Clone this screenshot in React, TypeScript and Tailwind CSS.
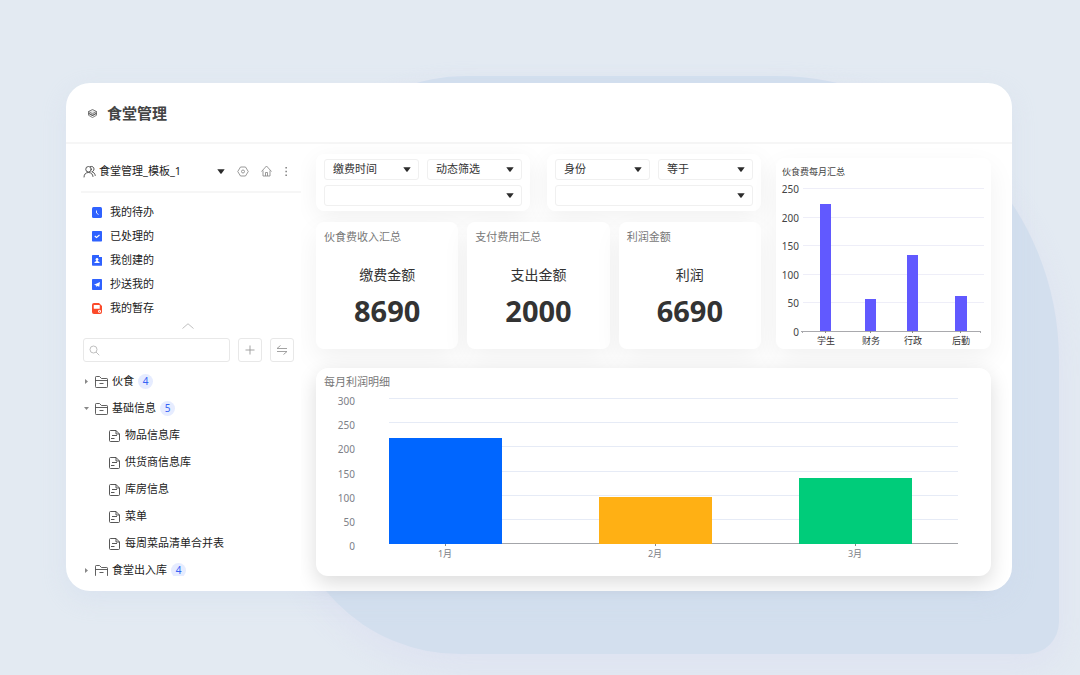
import type { ReactNode } from "react";

type BarDatum = { label: string; x: number; width: number; top: number; fill: string };
type Tick = { label: string; y: number };

const menuItems = [
  { label: "我的待办", icon: <TodoIcon /> },
  { label: "已处理的", icon: <DoneIcon /> },
  { label: "我创建的", icon: <CreatedIcon /> },
  { label: "抄送我的", icon: <SentIcon /> },
  { label: "我的暂存", icon: <DraftIcon /> },
];

const tree = [
  { label: "伙食", count: 4, open: false, children: [] },
  {
    label: "基础信息",
    count: 5,
    open: true,
    children: ["物品信息库", "供货商信息库", "库房信息", "菜单", "每周菜品清单合并表"],
  },
  { label: "食堂出入库", count: 4, open: false, children: [] },
];

const stats = [
  { title: "伙食费收入汇总", label: "缴费金额", value: "8690" },
  { title: "支付费用汇总", label: "支出金额", value: "2000" },
  { title: "利润金额", label: "利润", value: "6690" },
];

const feeTicks: Tick[] = [
  { label: "250", y: 8 },
  { label: "200", y: 37 },
  { label: "150", y: 65 },
  { label: "100", y: 94 },
  { label: "50", y: 122 },
  { label: "0", y: 151 },
];

const feeBars: BarDatum[] = [
  { label: "学生", x: 44, width: 11, top: 24, fill: "#6159ff" },
  { label: "财务", x: 89, width: 11, top: 119, fill: "#6159ff" },
  { label: "行政", x: 131, width: 11, top: 75, fill: "#6159ff" },
  { label: "后勤", x: 179, width: 12, top: 116, fill: "#6159ff" },
];

const profitTicks: Tick[] = [
  { label: "300", y: 8 },
  { label: "250", y: 32 },
  { label: "200", y: 56 },
  { label: "150", y: 81 },
  { label: "100", y: 105 },
  { label: "50", y: 129 },
  { label: "0", y: 153 },
];

const profitBars: BarDatum[] = [
  { label: "1月", x: 73, width: 113, top: 48, fill: "#0066ff" },
  { label: "2月", x: 283, width: 113, top: 107, fill: "#ffb014" },
  { label: "3月", x: 483, width: 113, top: 88, fill: "#00cc7a" },
];

function LogoIcon() {
  return (
    <svg className="h-[11px] w-[11px]" viewBox="0 0 22 22" fill="none" stroke="#555" strokeWidth="1.500" strokeLinejoin="round">
      <path d="M11 3l8 4-8 4.500L3 7z" fill="#e4e4e4" />
      <path d="M3 7v7.500L11 19l8-4.500V7" />
      <path d="M3 10.500l8 4.500 8-4.500" strokeWidth="2.200" />
    </svg>
  );
}

function UsersIcon() {
  return (
    <svg className="h-[13px] w-[13px]" viewBox="0 0 26 26" fill="none" stroke="#444" strokeWidth="1.800" strokeLinecap="round">
      <circle cx="11" cy="8.500" r="5.500" />
      <path d="M2 24c0-5.500 3.500-9 9-9s8.500 3.500 9 8" />
      <path d="M15 3c4-1 7 1.500 7 5 0 3-2 5-4.500 5.500C21.500 14.500 24 17 24.500 21" />
    </svg>
  );
}

function SettingsIcon() {
  return (
    <svg className="h-[11px] w-3" viewBox="0 0 24 22" fill="none" stroke="#888" strokeWidth="1.700">
      <path d="M7 2h10l5.500 9L17 20H7l-5.500-9z" strokeLinejoin="round" />
      <circle cx="12" cy="11" r="3" />
    </svg>
  );
}

function HomeIcon() {
  return (
    <svg className="h-3 w-[11px]" viewBox="0 0 22 24" fill="none" stroke="#888" strokeWidth="1.700" strokeLinejoin="round">
      <path d="M1 13L11 2l10 11M4 11v11h14V11" />
      <path d="M9 22v-7h4v7" />
    </svg>
  );
}

function MoreIcon() {
  return (
    <svg className="h-[11px] w-1" viewBox="0 0 8 22" fill="#666">
      <rect x="3" y="2" width="2.500" height="3" />
      <rect x="3" y="9.500" width="2.500" height="3" />
      <rect x="3" y="17" width="2.500" height="3" />
    </svg>
  );
}

function Caret() {
  return (
    <svg className="h-[5px] w-2" viewBox="0 0 8 5" fill="#2b2b2b">
      <path d="M.3.300h7.400L4.600 4.400q-.6.600-1.200 0z" />
    </svg>
  );
}

function TodoIcon() {
  return (
    <svg className="h-[11px] w-[10px]" viewBox="0 0 20 22">
      <path d="M3 0h14a3 3 0 0 1 3 3v16a3 3 0 0 1-3 3H3a3 3 0 0 1-3-3V3a3 3 0 0 1 3-3z" fill="#2f62ff" />
      <path d="M9 7v5l4 3" stroke="#fff" strokeWidth="1.700" fill="none" />
    </svg>
  );
}

function DoneIcon() {
  return (
    <svg className="h-[11px] w-[10px]" viewBox="0 0 20 22">
      <rect width="20" height="21" rx="1.500" fill="#2f62ff" />
      <path d="M5.500 10l3.500 3 6-5" stroke="#fff" strokeWidth="2.200" fill="none" />
    </svg>
  );
}

function CreatedIcon() {
  return (
    <svg className="h-[11px] w-[10px]" viewBox="0 0 20 22">
      <path d="M1.500 0H14v4h6v16.500a1 1 0 0 1-1 1H1.500A1.500 1.500 0 0 1 0 20V1.500A1.500 1.500 0 0 1 1.500 0z" fill="#2f62ff" />
      <circle cx="10" cy="8.500" r="2.700" fill="#fff" />
      <path d="M8.800 10h2.400l.6 2.500L15 14v2H5v-2l3.200-1.500z" fill="#fff" />
    </svg>
  );
}

function SentIcon() {
  return (
    <svg className="h-[11px] w-[10px]" viewBox="0 0 20 22">
      <rect width="20" height="22" rx="1.500" fill="#2f62ff" />
      <path d="M4 11.500L16 6l-1.500 9.500-4-1.500L8.500 16v-3z" fill="#fff" />
    </svg>
  );
}

function DraftIcon() {
  return (
    <svg className="h-[11px] w-[10px]" viewBox="0 0 20 22">
      <path d="M4 0h10l6 6v12a4 4 0 0 1-4 4H4a4 4 0 0 1-4-4V4a4 4 0 0 1 4-4z" fill="#fb4a2a" />
      <rect x="3.500" y="4" width="12" height="7.500" rx="1" fill="#fff" />
      <circle cx="15" cy="16.500" r="3" fill="#fff" />
      <circle cx="15" cy="16.500" r="1.200" fill="#fb4a2a" />
    </svg>
  );
}

function SearchIcon() {
  return (
    <svg className="h-[11px] w-[11px] shrink-0" viewBox="0 0 22 22" fill="none" stroke="#b5b5b5" strokeWidth="1.700">
      <circle cx="9" cy="9" r="7" />
      <path d="M14 14l6.500 6.500" />
    </svg>
  );
}

function FolderIcon() {
  return (
    <svg className="h-3 w-[13px] shrink-0" viewBox="0 0 26 24" fill="none" stroke="#444" strokeWidth="1.700" strokeLinejoin="round">
      <path d="M1 21V2.500A1.500 1.500 0 0 1 2.500 1H9l4 4h10.500A1.500 1.500 0 0 1 25 6.500V21.500a1.500 1.500 0 0 1-1.500 1.500h-21A1.500 1.500 0 0 1 1 21.500z" />
      <path d="M1 9h24M9 15h8" />
    </svg>
  );
}

function FileIcon() {
  return (
    <svg className="h-3 w-[11px] shrink-0" viewBox="0 0 22 24" fill="none" stroke="#444" strokeWidth="1.800" strokeLinejoin="round">
      <path d="M3 1h11l7 7v13a2 2 0 0 1-2 2H3a2 2 0 0 1-2-2V3a2 2 0 0 1 2-2z" />
      <path d="M14 1v7h7M6 11h10M4 17h7" />
    </svg>
  );
}

function Card({ className = "", children }: { className?: string; children: ReactNode }) {
  return <section className={`bg-white ${className}`}>{children}</section>;
}

function FilterSelect({ label, value }: { label: string; value: string }) {
  return (
    <div className="relative min-w-0 flex-1">
      <select
        aria-label={label}
        defaultValue={value}
        className="block h-[21px] w-full appearance-none rounded-[3px] border border-[#f0f0f0] bg-white pr-5 pl-2 text-[11px] text-[#333]"
      >
        <option value={value}>{value}</option>
      </select>
      <span className="pointer-events-none absolute inset-y-0 right-2 flex items-center">
        <Caret />
      </span>
    </div>
  );
}

function FilterCard({ field, operator }: { field: string; operator: string }) {
  return (
    <Card className="flex flex-1 flex-col gap-[5px] rounded-[8px] px-2 py-[5px] shadow-[0_6px_24px_rgba(0,0,0,0.06)]">
      <div className="flex gap-2">
        <FilterSelect label="字段" value={field} />
        <FilterSelect label="条件" value={operator} />
      </div>
      <div className="flex">
        <FilterSelect label="值" value="" />
      </div>
    </Card>
  );
}

function FeeChart() {
  return (
    <svg className="block w-full" viewBox="0 0 215 169" role="img" aria-label="伙食费每月汇总">
      {feeTicks.slice(0, -1).map((t) => (
        <rect key={t.label} x="27" y={t.y} width="181" height="1" fill="#eeeef8" />
      ))}
      {feeTicks.map((t) => (
        <text key={t.label} x="23" y={t.y + 5} textAnchor="end" fontSize="10" fill="#444">
          {t.label}
        </text>
      ))}
      <rect x="25" y="151" width="180" height="1" fill="#a9a9ad" />
      <rect x="26" y="151" width="1" height="2" fill="#a9a9ad" />
      <rect x="204" y="151" width="1" height="2" fill="#a9a9ad" />
      {feeBars.map((b) => (
        <g key={b.label}>
          <rect x={b.x} y={b.top} width={b.width} height={151 - b.top} fill={b.fill} />
          <rect x={b.x + 5} y="151" width="1" height="2" fill="#888" />
          <text x={b.x + 6} y="164" textAnchor="middle" fontSize="9" fill="#333">
            {b.label}
          </text>
        </g>
      ))}
    </svg>
  );
}

function ProfitChart() {
  return (
    <svg className="block w-full" viewBox="0 0 675 186" role="img" aria-label="每月利润明细">
      {profitTicks.slice(0, -1).map((t) => (
        <rect key={t.label} x="73" y={t.y} width="569" height="1" fill="#e6ebf6" />
      ))}
      {profitTicks.map((t) => (
        <text key={t.label} x="39" y={t.y + 7} textAnchor="end" fontSize="10" fill="#7d8087">
          {t.label}
        </text>
      ))}
      <rect x="73" y="153" width="569" height="1" fill="#a3a5a9" />
      {profitBars.map((b) => (
        <g key={b.label}>
          <rect x={b.x} y={b.top} width={b.width} height={154 - b.top} fill={b.fill} />
          <rect x={b.x + 56} y="154" width="1" height="2" fill="#888" />
          <text x={b.x + 56} y="167" textAnchor="middle" fontSize="9" fill="#7d8087">
            {b.label}
          </text>
        </g>
      ))}
    </svg>
  );
}

function CountBadge({ count }: { count: number }) {
  return (
    <span className="flex h-[15px] w-[15px] items-center justify-center rounded-full bg-[#e6ecff] text-[10px] text-[#3563f5]">
      {count}
    </span>
  );
}

function TreeNav() {
  return (
    <ul className="mt-[6px] h-[208px] overflow-hidden pl-[3px] text-[11px] text-[#222]">
      {tree.map((node) => (
        <li key={node.label}>
          <button type="button" aria-expanded={node.open} className="flex h-[27px] items-center gap-1">
            <svg className="mr-[2px] h-[5px] w-[5px]" viewBox="0 0 10 10" fill="#888">
              {node.open ? <path d="M0 2h10L5 8z" /> : <path d="M2 0v10l6-5z" />}
            </svg>
            <FolderIcon />
            <span>{node.label}</span>
            <CountBadge count={node.count} />
          </button>
          {node.open && (
            <ul>
              {node.children.map((child) => (
                <li key={child}>
                  <a href="#" className="flex h-[27px] items-center gap-[5px] pl-[25px]">
                    <FileIcon />
                    {child}
                  </a>
                </li>
              ))}
            </ul>
          )}
        </li>
      ))}
    </ul>
  );
}

function SideBar() {
  return (
    <aside className="relative z-10 ml-[15px] w-[220px] shrink-0 self-start bg-white">
      <div className="flex h-[49px] items-center border-b-2 border-[#f6f6f6] pt-[7px] pl-[2px]">
        <button type="button" className="flex w-[142px] items-center gap-[3px] text-[11px] text-[#222]">
          <UsersIcon />
          <span>食堂管理_模板_1</span>
          <span className="ml-auto">
            <Caret />
          </span>
        </button>
        <button type="button" aria-label="设置" className="ml-3">
          <SettingsIcon />
        </button>
        <button type="button" aria-label="主页" className="ml-3">
          <HomeIcon />
        </button>
        <button type="button" aria-label="更多" className="ml-3">
          <MoreIcon />
        </button>
      </div>

      <nav className="pt-[7px] pl-[11px]">
        {menuItems.map((item) => (
          <a key={item.label} href="#" className="flex h-6 items-center gap-2 text-[11px] text-[#222]">
            {item.icon}
            {item.label}
          </a>
        ))}
      </nav>

      <button type="button" aria-label="收起" className="flex h-3 w-full items-center justify-center pr-[6px]">
        <svg className="h-[6px] w-3" viewBox="0 0 24 12" fill="none" stroke="#b5b5b5" strokeWidth="1.700">
          <path d="M1 11L12 1.500 23 11" />
        </svg>
      </button>

      <div className="mt-[6px] flex gap-2 pr-[7px] pl-[2px]">
        <label className="flex h-6 min-w-0 flex-1 items-center rounded-[3px] border border-[#e8e8e8] px-[5px]">
          <SearchIcon />
          <input type="search" aria-label="搜索" className="ml-1 w-full min-w-0 text-[11px] outline-none" />
        </label>
        <button type="button" aria-label="新增" className="flex h-6 w-6 items-center justify-center rounded-[3px] border border-[#e8e8e8]">
          <svg className="h-[10px] w-[10px]" viewBox="0 0 20 20" stroke="#999" strokeWidth="1.800">
            <path d="M10 1v18M1 10h18" />
          </svg>
        </button>
        <button type="button" aria-label="切换" className="flex h-6 w-6 items-center justify-center rounded-[3px] border border-[#e8e8e8]">
          <svg className="h-[10px] w-3" viewBox="0 0 24 20" fill="none" stroke="#999" strokeWidth="1.800">
            <path d="M22 7H2l7-6M2 13h20l-7 6" />
          </svg>
        </button>
      </div>

      <TreeNav />
    </aside>
  );
}

export default function App() {
  return (
    <div className="relative min-h-screen overflow-hidden bg-[#e3eaf2] pt-[83px] pr-[68px] pb-[84px] pl-[66px] font-['Noto_Sans','Noto_Sans_CJK_SC',sans-serif]">
      {/* backdrop shape behind the window */}
      <div className="absolute top-[76px] right-[21px] left-[286px] h-[578px] rounded-tl-[180px] rounded-tr-[284px] rounded-br-[32px] rounded-bl-[174px] bg-[#d3dfee] shadow-[0_12px_30px_rgba(215,215,240,0.4)]" />

      <div className="relative rounded-[24px] bg-white shadow-[0_8px_24px_rgba(200,212,235,0.3)]">
        <header className="flex h-[61px] items-center gap-[9px] border-b-2 border-[#f6f6f6] pt-[2px] pl-[21px]">
          <LogoIcon />
          <h1 className="text-[15px] font-bold text-[#444]">食堂管理</h1>
        </header>

        <div className="flex gap-[15px] pr-[21px] pb-[15px]">
          <SideBar />

          <main className="min-w-0 flex-1 pt-[10px]">
            <div className="flex gap-[15px]">
              <div className="flex min-w-0 flex-[445] flex-col gap-[11px]">
                <div className="flex gap-[17px]">
                  <FilterCard field="缴费时间" operator="动态筛选" />
                  <FilterCard field="身份" operator="等于" />
                </div>
                <div className="grid flex-1 grid-cols-3 gap-[9px]">
                  {stats.map((s) => (
                    <Card key={s.title} className="flex flex-col rounded-[8px] px-2 pt-[7px] shadow-[0_10px_28px_rgba(0,0,0,0.06)]">
                      <h2 className="text-[11px] leading-4 text-[#777]">{s.title}</h2>
                      <p className="mt-5 text-center text-[14px] leading-5 text-[#333]">{s.label}</p>
                      <p className="mt-[10px] text-center text-[29px] leading-8 font-bold text-[#333]">{s.value}</p>
                    </Card>
                  ))}
                </div>
              </div>

              <Card className="mt-1 min-w-0 flex-[215] rounded-[8px] pt-[6px] shadow-[0_10px_28px_rgba(0,0,0,0.06)]">
                <h2 className="px-[6px] text-[9px] leading-4 text-[#444]">伙食费每月汇总</h2>
                <FeeChart />
              </Card>
            </div>

            <Card className="relative mt-[19px] rounded-[12px] pt-[6px] shadow-[0_7px_20px_rgba(0,0,0,0.14)]">
              <h2 className="px-2 text-[11px] leading-4 text-[#777]">每月利润明细</h2>
              <ProfitChart />
            </Card>
          </main>
        </div>
      </div>
    </div>
  );
}
